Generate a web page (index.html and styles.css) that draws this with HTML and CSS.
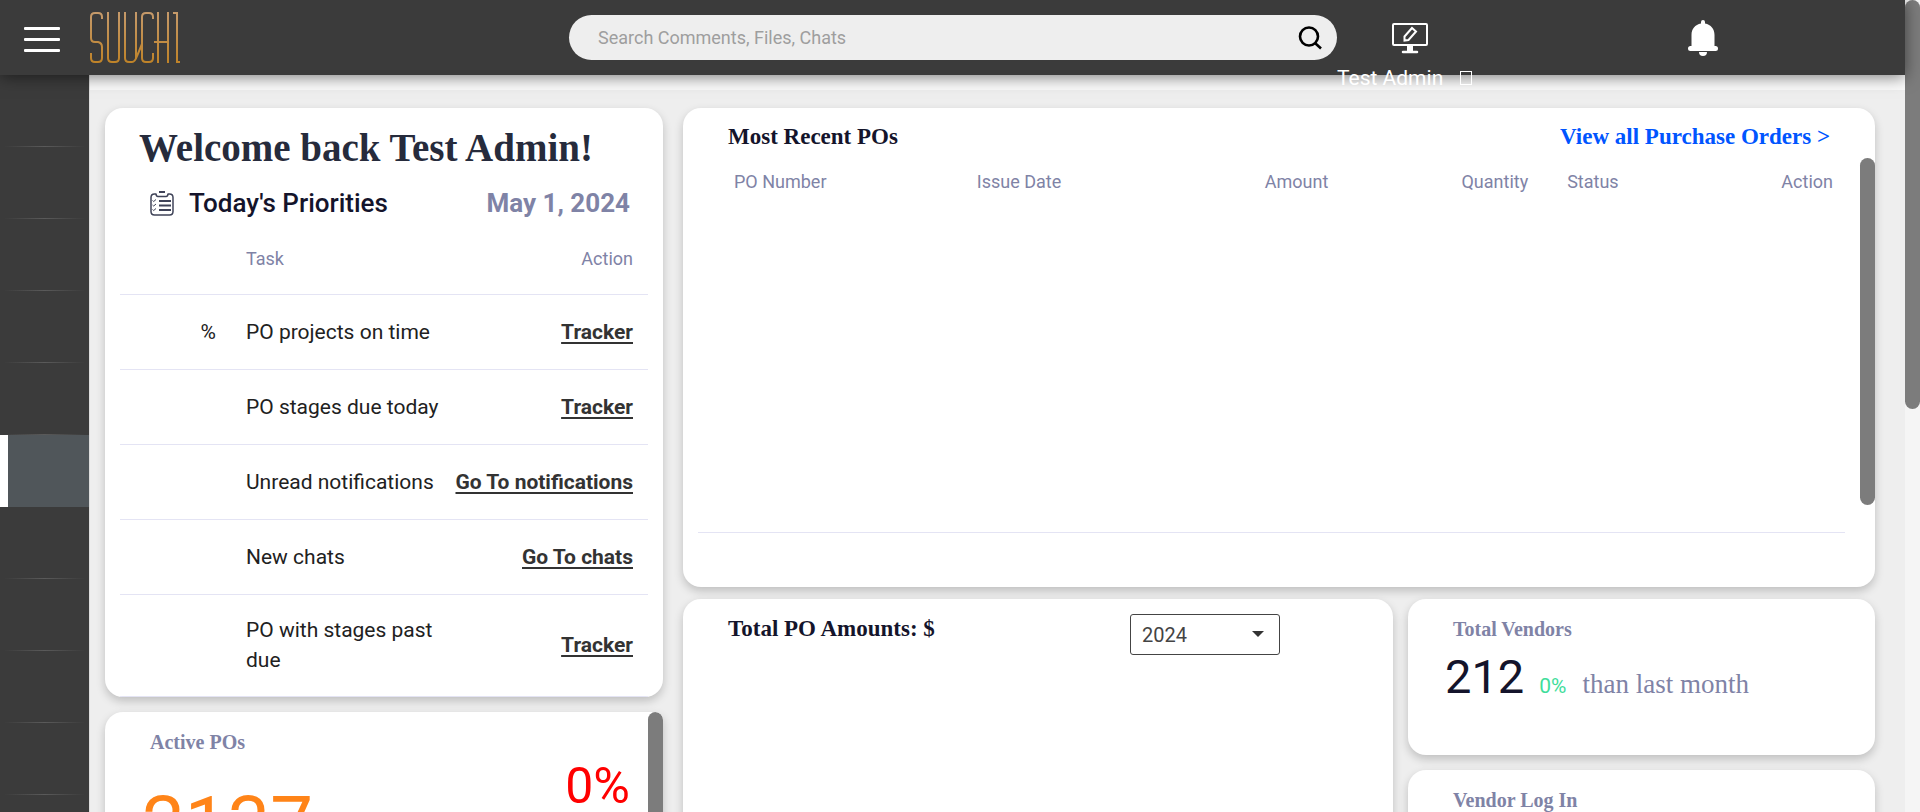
FILE: index.html
```html
<!DOCTYPE html>
<html lang="en">
<head>
<meta charset="utf-8">
<title>Suuchi Dashboard</title>
<link rel="stylesheet" href="styles.css">
</head>
<body>
<div class="app">
  <header class="topbar">
    <div class="brand">
      <button class="menu-btn" aria-label="Menu"><span class="bar"></span><span class="bar"></span><span class="bar"></span></button>
      <a href="#" class="logo" aria-label="Suuchi">
        <svg width="92" height="54" viewBox="0 0 92 54" fill="none" stroke="url(#gold)" stroke-width="2">
          <defs><linearGradient id="gold" gradientUnits="userSpaceOnUse" x1="0" y1="0" x2="0" y2="54"><stop offset="0" stop-color="#c59a6c"/><stop offset="1" stop-color="#bf8225"/></linearGradient></defs>
          <path d="M13 8V6q0-4-4-4H6Q2 2 2 6V27q0 4 4 4h3q4 1 4 5v11q0 4-4 4H6q-4 0-4-4v-5"/>
          <path d="M19 1v46q0 4 4 4h3q4 0 4-4V1"/>
          <path d="M36 1v46q0 4 4 4h3q3 0 5-6l5-12M47 1v46"/>
          <path d="M64 8V6q0-4-4-4h-3q-4 0-4 4v41q0 4 4 4h3q4 0 4-4v-5"/>
          <path d="M69 1v51M79 1v51M65 31h15M84 2h4v49h3"/>
        </svg>
      </a>
    </div>
    <form class="search" role="search">
      <input type="text" aria-label="Search" placeholder="Search Comments, Files, Chats">
      <button type="button" class="search-btn" aria-label="Search">
        <svg width="24" height="24" viewBox="0 0 24 24" fill="none" stroke="#000" stroke-width="2.600"><circle cx="11" cy="10.500" r="9"/><path d="M17 17l6 5.500"/></svg>
      </button>
    </form>
    <div class="user">
      <button class="icon-btn" aria-label="Board">
        <svg width="36" height="32" viewBox="0 0 36 32" fill="none" stroke="#fff" stroke-width="2"><rect x="1" y="2" width="34" height="21" rx="1"/><path d="M18 24v5" stroke-width="6"/><path d="M11 30h14" stroke-width="2.500" stroke-linecap="round"/><path d="M12.500 14.500L20 6l4 3.500-7.500 8.500-4 .5z"/></svg>
      </button>
      <button class="account">Test Admin <span class="caret"></span></button>
    </div>
    <button class="bell" aria-label="Notifications">
      <svg width="30" height="36" viewBox="0 0 30 36" fill="#fff"><path d="M13 2a2 2 0 0 1 4 0v1.500c6 1 9.500 5.500 9.500 11.500v11h1a2.300 2.300 0 0 1 0 5h-25a2.300 2.300 0 0 1 0-5h1V15c0-6 3.500-10.500 9.500-11.500zM11 32h8a4 4 0 0 1-8 0z"/></svg>
    </button>
  </header>
  <div class="body">
    <nav class="sidebar" aria-label="Main">
      <a href="#"></a><a href="#"></a><a href="#"></a><a href="#"></a><a href="#"></a>
      <a href="#" class="active" aria-current="page"></a>
      <a href="#"></a><a href="#"></a><a href="#"></a><a href="#"></a><a href="#"></a>
    </nav>
    <div class="content">
      <div class="strip"></div>
      <main class="dash">
        <div class="col col-left">
          <section class="card priorities">
            <h1>Welcome back Test Admin!</h1>
            <div class="sub">
              <svg width="24" height="25" viewBox="0 0 24 25" fill="none" stroke="#3f4358" stroke-width="1.500"><path d="M6 3H4.500Q1 3 1 6.500v14Q1 24 4.500 24h15q3.500 0 3.500-3.500v-14Q23 3 19.500 3H18M6 2.500q0 3 2 3h8q2 0 2-3"/><path d="M9 1h6M9 10h12M9 14.500h12M9 19h12" stroke-width="2"/><path d="M2.500 9.500l1.200 1L6 8.500M2.500 14l1.200 1L6 13M2.500 18.500l1.200 1L6 17.500" stroke-width="1"/></svg>
              <h2>Today's Priorities</h2>
              <time datetime="2024-05-01">May 1, 2024</time>
            </div>
            <table class="tasks">
              <thead><tr><th class="num"></th><th class="task">Task</th><th class="act">Action</th></tr></thead>
              <tbody>
                <tr><td class="num">%</td><td>PO projects on time</td><td class="act"><a href="#">Tracker</a></td></tr>
                <tr><td></td><td>PO stages due today</td><td class="act"><a href="#">Tracker</a></td></tr>
                <tr><td></td><td>Unread notifications</td><td class="act"><a href="#">Go To notifications</a></td></tr>
                <tr><td></td><td>New chats</td><td class="act"><a href="#">Go To chats</a></td></tr>
                <tr><td></td><td>PO with stages past due</td><td class="act"><a href="#">Tracker</a></td></tr>
              </tbody>
            </table>
          </section>
          <section class="card active-pos">
            <h3>Active POs</h3>
            <div class="figures"><span class="count">2137</span><span class="rate">0%</span></div>
            <span class="thumb"></span>
          </section>
        </div>
        <div class="col col-right">
          <section class="card recent">
            <div class="card-head"><h2>Most Recent POs</h2><a href="#">View all Purchase Orders &gt;</a></div>
            <div class="recent-list">
              <table class="orders">
                <thead><tr><th class="c1">PO Number</th><th class="c2">Issue Date</th><th class="c3 r">Amount</th><th class="c4 r">Quantity</th><th class="c5">Status</th><th class="c6 r">Action</th></tr></thead>
              </table>
              <span class="thumb"></span>
            </div>
          </section>
          <div class="lower">
            <section class="card totals">
              <h2>Total PO Amounts: $</h2>
              <div class="year">
                <select aria-label="Year"><option>2024</option></select>
                <svg width="12" height="6" viewBox="0 0 12 6"><path d="M0 0h12L6 6z" fill="#333"/></svg>
              </div>
            </section>
            <div class="side">
              <section class="card vendors">
                <h3>Total Vendors</h3>
                <p class="stat"><span class="big">212</span><span class="pct">0%</span><span class="note">than last month</span></p>
              </section>
              <section class="card vendors"><h3>Vendor Log In</h3></section>
            </div>
          </div>
        </div>
      </main>
    </div>
  </div>
</div>
<div class="page-scroll"><span class="page-thumb"></span></div>
</body>
</html>
```
FILE: styles.css
```css
* { box-sizing: border-box; }
body {
  margin: 0;
  height: 100vh;
  display: flex;
  overflow: hidden;
  background: #eee;
  font-family: Roboto, sans-serif;
  color: #212121;
}
h1, h2, h3, p { margin: 0; }
button { border: 0; padding: 0; background: none; font: inherit; cursor: pointer; }
svg { display: block; }
.app { flex: 1; min-width: 0; display: flex; flex-direction: column; }

.topbar {
  position: relative;
  z-index: 2;
  flex: none;
  height: 75px;
  display: grid;
  grid-template-columns: 569fr 768fr 146fr 422fr;
  background: #3b3b3b;
  box-shadow: 0 2px 15px rgba(0, 0, 0, .5);
}
.brand { display: flex; align-items: flex-start; gap: 29px; padding: 11px 0 0 24px; }
.menu-btn { display: flex; flex-direction: column; gap: 8px; margin-top: 16px; }
.bar { width: 36px; height: 3px; border-radius: 1px; background: #fff; }
.search {
  height: 45px;
  margin-top: 15px;
  padding: 0 15px 0 29px;
  display: flex;
  align-items: center;
  border-radius: 23px;
  background: #eee;
}
.search input {
  flex: 1;
  border: 0;
  padding: 0;
  outline: 0;
  background: none;
  font: 18px/24px Roboto, sans-serif;
}
.search input::placeholder { color: #9e9e9e; }
.user { padding-top: 22px; white-space: nowrap; }
.icon-btn { display: block; margin-left: 55px; }
.account {
  display: flex;
  align-items: center;
  gap: 17px;
  margin-top: 12px;
  color: #fff;
  font-size: 21px;
  line-height: 24px;
}
.caret { width: 12px; height: 14px; border: 1px solid #fff; }
.bell { justify-self: start; align-self: start; margin: 20px 0 0 205px; }

.body { flex: 1; min-height: 0; display: flex; }
.sidebar {
  flex: none;
  width: 90px;
  overflow: hidden;
  background: #3b3b3b;
  border-right: 1px solid #ddd;
}
.sidebar a {
  display: block;
  height: 72px;
  border-bottom: 1px solid;
  border-image: linear-gradient(90deg, #3b3b3b 5%, #5a5a5a 50%, #3b3b3b 95%) 1;
}
.sidebar .active { background: #50565a; border-left: 8px solid #fff; border-image: none; border-bottom: 0; }
.content { flex: 1; min-width: 0; overflow: hidden; }
.strip { height: 15px; background: #fafafa; }

.dash { display: grid; grid-template-columns: 558fr 1192fr; gap: 20px; padding: 18px 30px 0 15px; }
.col { min-width: 0; display: flex; flex-direction: column; }
.col-left { gap: 15px; }
.col-right { gap: 12px; }
.card {
  position: relative;
  overflow: hidden;
  border-radius: 18px;
  background: #fff;
  box-shadow: 0 4px 10px rgba(0, 0, 0, .2);
}
.thumb { position: absolute; top: 0; right: 0; width: 15px; height: 347px; border-radius: 8px; background: #7c7c7c; }

h1 { font: bold 39px/48px "Liberation Serif", serif; color: #262b3c; }
h2 { font: bold 23px/30px "Liberation Serif", serif; color: #14142b; }
h3 { font: bold 20px/24px "Liberation Serif", serif; color: #7f83a6; }

.priorities { padding: 16px 15px 0; }
.priorities h1 { margin-left: 19px; white-space: nowrap; }
.sub { display: flex; align-items: center; gap: 15px; padding: 13px 18px 2px 30px; }
.sub h2, .sub time { font: 500 26px/36px Roboto, sans-serif; }
.sub time { margin-left: auto; color: #7f83a6; font-weight: bold; }
.tasks { width: 100%; border-collapse: collapse; table-layout: fixed; }
th { padding: 0 15px; font-size: 18px; font-weight: 400; color: #7f83a6; text-align: left; }
.tasks th { height: 71px; border-bottom: 1px solid #e4e4f4; }
.tasks td { height: 75px; padding: 18px 0 18px 15px; font-size: 21px; line-height: 30px; border-bottom: 1px solid #e4e4f4; }
.tasks .num { width: 111px; padding-right: 15px; text-align: right; }
.tasks .task { width: 212px; }
.tasks .act { padding: 0 15px 0 0; text-align: right; white-space: nowrap; }
.tasks tr:last-child td { height: 102px; }
.tasks a { color: #333; font-weight: bold; text-underline-offset: 3px; }

.active-pos { height: 300px; padding: 18px 33px 0 37px; border-top-right-radius: 8px; }
.active-pos h3 { margin-left: 8px; }
.figures { display: flex; justify-content: space-between; align-items: flex-start; }
.count { margin-top: 25px; font-size: 76px; line-height: 90px; color: #ff8418; }
.rate { font-size: 50px; line-height: 64px; color: #f00; }

.recent { height: 479px; padding-top: 14px; }
.card-head { display: flex; justify-content: space-between; padding: 0 45px; }
.card-head a { font: bold 23px/30px "Liberation Serif", serif; color: #05f; text-decoration: none; }
.recent-list { position: relative; margin-top: 6px; height: 375px; }
.recent-list::after { content: ""; position: absolute; left: 15px; right: 30px; bottom: 0; height: 1px; background: #e4e4f4; }
.orders { width: calc(100% - 63px); margin-left: 36px; border-collapse: collapse; table-layout: fixed; }
.orders tr > th { height: 47px; }
.orders .r { text-align: right; }
.orders .c1 { width: 21.5%; }
.orders .c2 { width: 16%; }
.orders .c3 { width: 17.8%; }
.orders .c4 { width: 18.5%; padding-right: 24px; }
.orders .c5 { width: 12%; }

.lower { display: grid; grid-template-columns: 710fr 467fr; gap: 15px; }
.totals { height: 400px; padding: 15px 113px 0 45px; display: flex; justify-content: space-between; align-items: flex-start; }
.year { position: relative; }
.year select {
  appearance: none;
  width: 150px;
  height: 41px;
  padding: 0 11px;
  border: 1px solid #444;
  border-radius: 3px;
  background: #fff;
  color: #444;
  font: 20px/24px Roboto, sans-serif;
}
.year svg { position: absolute; right: 16px; top: 17px; }
.side { display: flex; flex-direction: column; gap: 15px; }
.vendors { height: 156px; padding: 18px 37px 0; }
.vendors h3 { margin-left: 8px; }
.stat { display: flex; align-items: baseline; margin-top: 8px; line-height: 56px; }
.big { font-size: 47px; color: #14142b; }
.pct { margin-left: 15px; font-size: 21px; color: #3fdd9b; }
.note { margin-left: 16px; font-family: "Liberation Serif", serif; font-size: 27px; color: #7f83a6; }

.page-scroll { flex: none; width: 15px; background: #f5f5f5; }
.page-thumb { display: block; height: 409px; border-radius: 8px; background: #7c7c7c; }
```
